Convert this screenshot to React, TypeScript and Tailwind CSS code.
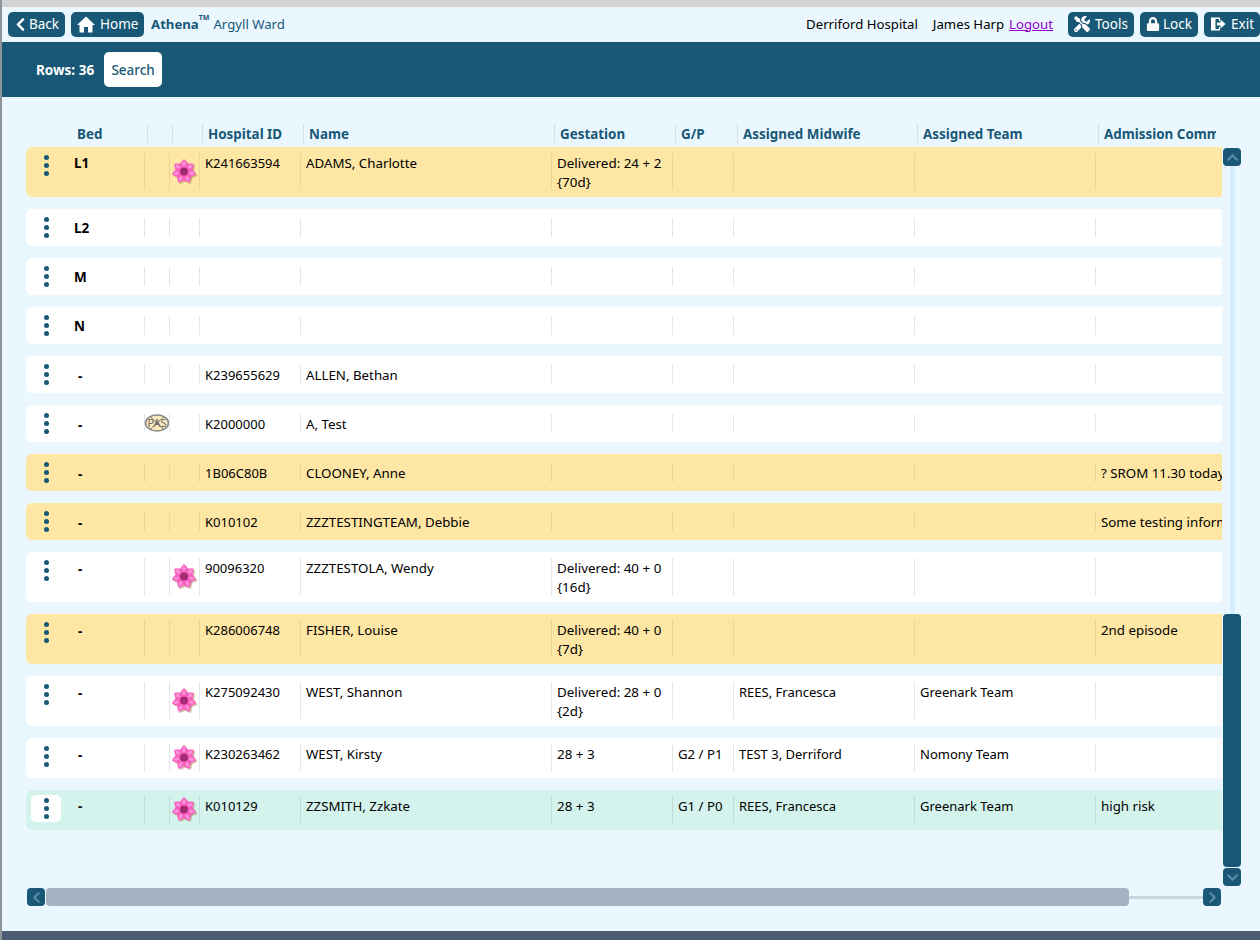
import React from "react";
import { FaChevronLeft, FaChevronRight, FaChevronUp, FaChevronDown, FaTools, FaLock } from "react-icons/fa";

type Row = {
  bed: string; id?: string; name?: string; gest?: string[]; gp?: string; mid?: string; team?: string; comm?: string;
  flower?: boolean; pas?: boolean; tone: "white" | "amber" | "mint"; h: string;
};

const rows: Row[] = [
  { bed: "L1", id: "K241663594", name: "ADAMS, Charlotte", gest: ["Delivered: 24 + 2", "{70d}"], flower: true, tone: "amber", h: "h-[50px]" },
  { bed: "L2", tone: "white", h: "h-[37px]" },
  { bed: "M", tone: "white", h: "h-[37px]" },
  { bed: "N", tone: "white", h: "h-[37px]" },
  { bed: "-", id: "K239655629", name: "ALLEN, Bethan", tone: "white", h: "h-[37px]" },
  { bed: "-", id: "K2000000", name: "A, Test", pas: true, tone: "white", h: "h-[37px]" },
  { bed: "-", id: "1B06C80B", name: "CLOONEY, Anne", comm: "? SROM 11.30 today", tone: "amber", h: "h-[37px]" },
  { bed: "-", id: "K010102", name: "ZZZTESTINGTEAM, Debbie", comm: "Some testing information", tone: "amber", h: "h-[37px]" },
  { bed: "-", id: "90096320", name: "ZZZTESTOLA, Wendy", gest: ["Delivered: 40 + 0", "{16d}"], flower: true, tone: "white", h: "h-[50px]" },
  { bed: "-", id: "K286006748", name: "FISHER, Louise", gest: ["Delivered: 40 + 0", "{7d}"], comm: "2nd episode", tone: "amber", h: "h-[50px]" },
  { bed: "-", id: "K275092430", name: "WEST, Shannon", gest: ["Delivered: 28 + 0", "{2d}"], mid: "REES, Francesca", team: "Greenark Team", flower: true, tone: "white", h: "h-[50px]" },
  { bed: "-", id: "K230263462", name: "WEST, Kirsty", gest: ["28 + 3"], gp: "G2 / P1", mid: "TEST 3, Derriford", team: "Nomony Team", flower: true, tone: "white", h: "h-[40px]" },
  { bed: "-", id: "K010129", name: "ZZSMITH, Zzkate", gest: ["28 + 3"], gp: "G1 / P0", mid: "REES, Francesca", team: "Greenark Team", comm: "high risk", flower: true, tone: "mint", h: "h-[40px]" },
];

const font = { fontFamily: '"Noto Sans", "Open Sans", sans-serif' };

function Flower() {
  const petals = [0, 51.4, 102.9, 154.3, 205.7, 257.1, 308.6];
  const d = "M0 0 C-7 -3 -5 -8 0 -12.5 C5 -8 7 -3 0 0Z";
  return (
    <svg width="27" height="26" viewBox="0 0 27 26" aria-hidden="true">
      <g transform="translate(14.3 13.8)">
        {petals.map((a) => (
          <path key={a} d={d} fill="#a8894f" opacity="0.5" transform={`rotate(${a})`} />
        ))}
      </g>
      <g transform="translate(13 12.5)">
        {petals.map((a) => (
          <path key={a} d={d} fill="#f962c2" transform={`rotate(${a})`} />
        ))}
        {petals.map((a) => (
          <path key={`h${a}`} d="M0 -4.5 L-1.8 -8 L0 -11 L1.8 -8Z" fill="#fc94d6" transform={`rotate(${a})`} />
        ))}
        <circle r="4" fill="#a52a74" />
      </g>
    </svg>
  );
}

function PasIcon() {
  return (
    <svg width="26" height="18" viewBox="0 0 26 18" aria-hidden="true">
      <ellipse cx="13" cy="9" rx="11.5" ry="8" fill="#fdebc0" stroke="#8a8a8a" strokeWidth="1.6" />
      <text x="13" y="13" textAnchor="middle" fontSize="11" fill="#6a6a6a" style={font}>PAS</text>
      <line x1="6" y1="2.5" x2="20" y2="15.5" stroke="#666" strokeWidth="0.9" />
      <line x1="20" y1="2.5" x2="6" y2="15.5" stroke="#666" strokeWidth="0.9" />
    </svg>
  );
}

function HomeIcon() {
  return (
    <svg width="18" height="17" viewBox="0 0 18 17" fill="#fff" aria-hidden="true">
      <path d="M9 0.5 L18 9 L15.5 9 L15.5 16.5 L11 16.5 L11 11 L7 11 L7 16.5 L2.5 16.5 L2.5 9 L0 9Z" />
    </svg>
  );
}

function ExitIcon() {
  return (
    <svg width="16" height="16" viewBox="0 0 16 16" fill="#fff" aria-hidden="true">
      <path d="M1 1.5 H10 V5 H9 V3 L5.5 3 V13 H9 V11 H10 V14.5 H1Z" />
      <path d="M7 6.5 H10.5 V3.5 L15.5 8 L10.5 12.5 V9.5 H7Z" />
    </svg>
  );
}

function Kebab() {
  return (
    <span className="flex flex-col items-center gap-[3px]">
      <span className="w-[5px] h-[5px] rounded-full bg-[#185876]" />
      <span className="w-[5px] h-[5px] rounded-full bg-[#185876]" />
      <span className="w-[5px] h-[5px] rounded-full bg-[#185876]" />
    </span>
  );
}

function NavButton({ icon, label, cls }: { icon: React.ReactNode; label: string; cls: string }) {
  return (
    <button className={`h-[25px] flex items-center rounded-[5px] bg-[#185876] text-white text-[13.5px] ${cls}`}>
      {icon}
      <span>{label}</span>
    </button>
  );
}

function ArrowBtn({ children }: { children: React.ReactNode }) {
  return (
    <div className="w-[18px] h-[18px] shrink-0 rounded-[4px] bg-[#185876] text-[#5f8ca6] flex items-center justify-center">
      {children}
    </div>
  );
}

const toneCls = { white: "bg-white", amber: "bg-[#fee6a4]", mint: "bg-[#d3f3ec]" };
const dividerCls = { white: "border-[#e4e7ea]", amber: "border-[#ecd49a]", mint: "border-[#c0dcd8]" };

function Cell({ w, r, children, cls = "" }: { w: string; r: Row; children?: React.ReactNode; cls?: string }) {
  const m = r.h === "h-[37px]" ? "my-[9px]" : "mt-[6px] mb-[7px]";
  return (
    <div className={`${w} shrink-0 ${m} border-l ${dividerCls[r.tone]} pl-[5px] pt-[1px] whitespace-nowrap ${cls}`}>
      {children}
    </div>
  );
}

function bedPad(r: Row) {
  if (r.bed !== "-") return r.h === "h-[37px]" ? "pt-[10px]" : "pt-[7px]";
  if (r.tone === "mint") return "pt-[7px] pl-[4px]";
  return r.h === "h-[37px]" ? "pt-[11px] pl-[4px]" : "pt-[8px] pl-[4px]";
}

function TableRow({ r }: { r: Row }) {
  const isLast = r.tone === "mint";
  return (
    <div className={`${r.h} flex items-stretch rounded-l-[6px] ${toneCls[r.tone]} text-[13px] leading-[19px] text-black`}>
      <div className="w-[48px] shrink-0 pl-[5px] pt-[5px]">
        <div className={`w-[30px] h-[27px] rounded-[5px] flex justify-center items-center ${isLast ? "bg-white" : ""}`}>
          <Kebab />
        </div>
      </div>
      <div className={`w-[70px] shrink-0 font-bold text-[13.5px] ${bedPad(r)}`}>{r.bed}</div>
      <Cell w="w-[25px]" r={r} cls="relative">
        {r.pas && <span className="absolute -left-[1px] top-[0px]"><PasIcon /></span>}
      </Cell>
      <Cell w="w-[30px]" r={r} cls="relative">
        {r.flower && <span className="absolute left-[1px] top-[calc(50%-13px)]"><Flower /></span>}
      </Cell>
      <Cell w="w-[101px]" r={r}>{r.id}</Cell>
      <Cell w="w-[251px]" r={r} cls="text-[13.3px]">{r.name}</Cell>
      <Cell w="w-[121px]" r={r} cls="text-[13.4px]">
        {r.gest?.map((g) => <div key={g}>{g}</div>)}
      </Cell>
      <Cell w="w-[61px]" r={r} cls="text-[13.2px]">{r.gp}</Cell>
      <Cell w="w-[181px]" r={r}>{r.mid}</Cell>
      <Cell w="w-[181px]" r={r}>{r.team}</Cell>
      <Cell w="w-[127px]" r={r} cls="overflow-hidden -mr-[2px] text-[13.3px]">{r.comm}</Cell>
    </div>
  );
}

const headers: [string, string][] = [
  ["w-[25px]", ""], ["w-[30px]", ""], ["w-[101px]", "Hospital ID"], ["w-[251px]", "Name"], ["w-[121px]", "Gestation"],
  ["w-[62px]", "G/P"], ["w-[180px]", "Assigned Midwife"], ["w-[181px]", "Assigned Team"], ["w-[118px]", "Admission Comments"],
];

export default function App() {
  return (
    <div className="w-[1260px] h-[940px] overflow-hidden flex flex-col bg-[#eaf7ff] border-l-2 border-[#8f9498]" style={font}>
      <div className="h-[7px] shrink-0 bg-[#d3d3d3] -ml-[2px]" />
      <header className="h-[35px] shrink-0 flex items-center pl-[6px] pb-[1px] text-[13.2px]">
        <NavButton cls="w-[57px] pl-[5px] gap-[1px]" icon={<FaChevronLeft size={15} />} label="Back" />
        <NavButton cls="w-[73px] ml-[6px] pl-[6px] gap-[5px]" icon={<HomeIcon />} label="Home" />
        <span className="ml-[7px] pt-[1px] font-bold text-[#185876]">Athena<sup className="text-[7px] align-[5px]">TM</sup></span>
        <span className="ml-[4px] pt-[1px] text-[#185876]">Argyll Ward</span>
        <span className="ml-auto pt-[1px] text-black">Derriford Hospital</span>
        <span className="ml-[15px] pt-[1px] text-black">James Harp</span>
        <a className="ml-[5px] pt-[1px] underline text-[#8e00c8]">Logout</a>
        <NavButton cls="w-[66px] ml-[15px] pl-[6px] gap-[5px]" icon={<FaTools size={16} />} label="Tools" />
        <NavButton cls="w-[58px] ml-[6px] pl-[6px] gap-[3px]" icon={<FaLock size={14} />} label="Lock" />
        <NavButton cls="w-[56px] ml-[6px] pl-[6px] gap-[5px]" icon={<ExitIcon />} label="Exit" />
      </header>
      <div className="h-[55px] shrink-0 bg-[#185876] flex items-center pl-[34px]">
        <span className="text-white font-bold text-[13.5px] pt-[1px]">Rows: 36</span>
        <button className="ml-[10px] w-[58px] h-[35px] rounded-[5px] bg-white text-[#185876] text-[13.5px] font-medium pt-[1px]">Search</button>
      </div>
      <main className="flex-1 min-h-0 pl-[24px] pt-[27px] flex">
        <div className="w-[1196px] shrink-0 flex flex-col">
          <div className="h-[23px] shrink-0 flex items-start text-[13.4px] leading-[19px] font-bold text-[#185876] overflow-hidden">
            <div className="w-[121px] shrink-0 pl-[51px] pt-[1px]">Bed</div>
            {headers.map(([w, t]) => (
              <div key={w + t} className={`${w} shrink-0 h-[19px] border-l border-[#d3dfe7] pl-[5px] pt-[1px] whitespace-nowrap overflow-hidden`}>{t}</div>
            ))}
          </div>
          <div className="flex flex-col gap-[12px]">
            {rows.map((r, i) => <TableRow key={i} r={r} />)}
          </div>
          <div className="mt-[58px] flex items-center pl-[1px] w-[1195px]">
            <ArrowBtn><FaChevronLeft size={13} /></ArrowBtn>
            <div className="ml-[1px] w-[1083px] h-[18px] rounded-[4px] bg-[#a6b2c2]" />
            <div className="w-[74px] h-[3px] bg-[#cbd5df]" />
            <ArrowBtn><FaChevronRight size={13} /></ArrowBtn>
          </div>
        </div>
        <div className="w-[18px] ml-[1px] mt-[24px] shrink-0 flex flex-col items-center h-[738px]">
          <ArrowBtn><FaChevronUp size={13} /></ArrowBtn>
          <div className="w-[5px] h-[448px] bg-[#d4efff]" />
          <div className="w-[18px] h-[253px] rounded-[4px] bg-[#185876]" />
          <div className="h-[1px]" />
          <ArrowBtn><FaChevronDown size={13} /></ArrowBtn>
        </div>
      </main>
      <div className="h-[9px] shrink-0 bg-[#4a5b73] -ml-[2px]" />
    </div>
  );
}
